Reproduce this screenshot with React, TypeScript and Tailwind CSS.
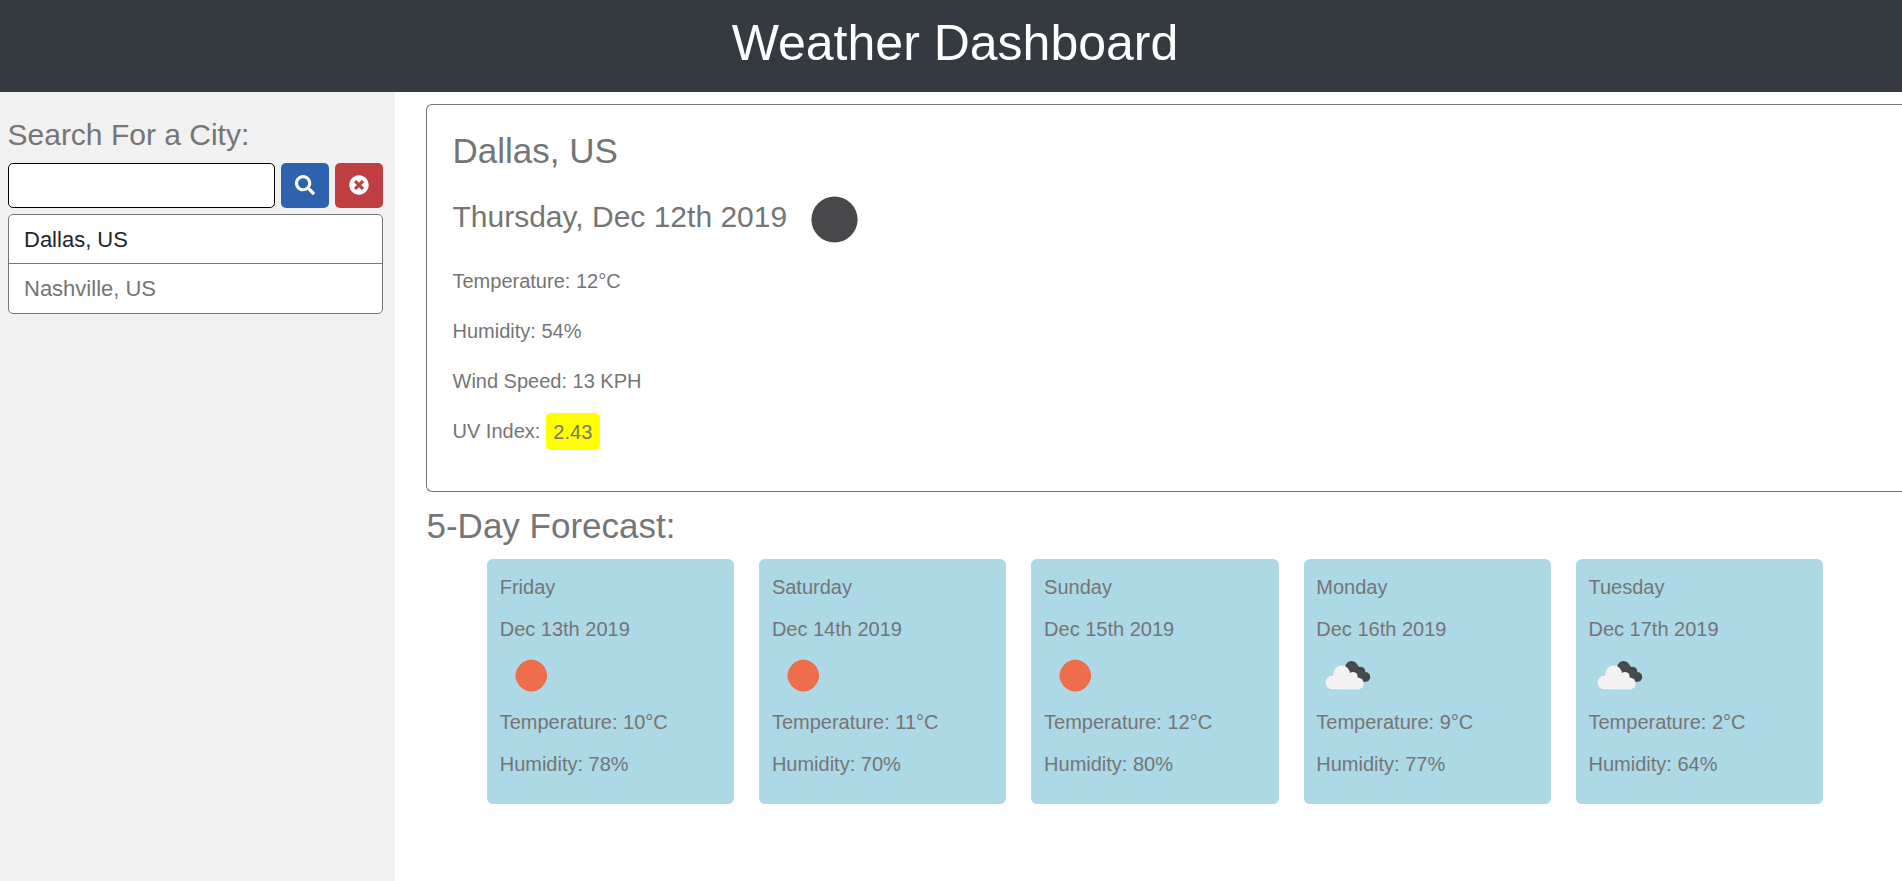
import { FaSearch, FaTimesCircle } from "react-icons/fa";

type Sky = "clear" | "clouds";

interface Day {
  name: string;
  date: string;
  sky: Sky;
  temperature: string;
  humidity: string;
}

const days: Day[] = [
  { name: "Friday", date: "Dec 13th 2019", sky: "clear", temperature: "10°C", humidity: "78%" },
  { name: "Saturday", date: "Dec 14th 2019", sky: "clear", temperature: "11°C", humidity: "70%" },
  { name: "Sunday", date: "Dec 15th 2019", sky: "clear", temperature: "12°C", humidity: "80%" },
  { name: "Monday", date: "Dec 16th 2019", sky: "clouds", temperature: "9°C", humidity: "77%" },
  { name: "Tuesday", date: "Dec 17th 2019", sky: "clouds", temperature: "2°C", humidity: "64%" },
];

function SkyIcon({ sky }: { sky: Sky }) {
  if (sky === "clear") {
    return (
      <svg className="block h-[39px] w-[62px]" viewBox="0 0 62 39">
        <path
          d="M31.3 3.5 C39 3.5 47.1 12 47.1 19.5 C47.1 27.3 39 35.6 31.3 35.6 C23.5 35.6 15.4 27.3 15.4 19.5 C15.4 12 23.5 3.5 31.3 3.5 Z"
          fill="#ed6e4c"
        />
        <circle cx="31.3" cy="19.5" r="15.4" fill="#ed6e4c" />
      </svg>
    );
  }
  return (
    <svg className="block h-[39px] w-[62px]" viewBox="0 0 62 39">
      <g fill="#474a4c">
        <circle cx="35.5" cy="11.2" r="6.2" />
        <circle cx="44.5" cy="15.5" r="4.8" />
        <circle cx="49.2" cy="21" r="5" />
        <path d="M31 10 L41 8.5 L48 17 L48 26 L40 25 Z" />
      </g>
      <g fill="#f2f2f2">
        <circle cx="16.3" cy="26.5" r="6.8" />
        <circle cx="25.7" cy="17.8" r="8.3" />
        <circle cx="37" cy="20.5" r="4.6" />
        <circle cx="41.7" cy="27.4" r="6" />
        <path d="M16.3 20 L22 17 L36 17 L42 24 L41.7 33.4 L16.3 33.3 Z" />
      </g>
    </svg>
  );
}

function DayCard({ day }: { day: Day }) {
  return (
    <article className="flex h-[245px] flex-col gap-3 rounded-[6px] bg-[#add8e6] px-[12.7px] pt-[13px] leading-[30px]">
      <p>{day.name}</p>
      <p>{day.date}</p>
      <SkyIcon sky={day.sky} />
      <p>Temperature: {day.temperature}</p>
      <p>Humidity: {day.humidity}</p>
    </article>
  );
}

export default function App() {
  return (
    <div className="flex h-[881px] flex-col overflow-hidden bg-white font-['Liberation_Sans',Arial,sans-serif] text-[20px] text-[#757575]">
      <header className="h-[92px] shrink-0 bg-[#343a40] pt-[13px] pl-2 text-center">
        <h1 className="text-[50px] leading-[60px] text-white">Weather Dashboard</h1>
      </header>
      <div className="flex min-h-0 flex-1">
        <aside className="w-[395px] shrink-0 bg-[#f1f1f1] pt-[25px] pr-3 pl-2">
          <h2 className="-ml-[0.5px] text-[30px] leading-[36px]">Search For a City:</h2>
          <form className="mt-[10px] flex gap-[6px]" onSubmit={(e) => e.preventDefault()}>
            <input
              aria-label="City"
              className="h-[45px] w-[267px] rounded-[5px] border border-black bg-white px-3 outline-none"
            />
            <button aria-label="Search" className="flex h-[45px] w-12 items-center justify-center rounded-[5px] bg-[#2f62ae] pb-[2px] text-white">
              <FaSearch size={20} />
            </button>
            <button aria-label="Clear" className="flex h-[45px] w-12 items-center justify-center rounded-[5px] bg-[#bf3e41] pb-[2px] text-white">
              <FaTimesCircle size={20} />
            </button>
          </form>
          <ul className="mt-[6px] rounded-[5px] border border-[#757575] bg-white text-[22px]">
            <li className="h-[49px] border-b border-[#757575] pl-[15px] leading-[49px] text-[#212529]">Dallas, US</li>
            <li className="h-[49px] pl-[15px] leading-[49px]">Nashville, US</li>
          </ul>
        </aside>
        <main className="min-w-0 flex-1 pt-3 pl-[31px]">
          <section className="h-[388px] rounded-l-[6px] border border-r-0 border-[#757575] pt-[25px] pl-[25.5px]">
            <h2 className="text-[35px] leading-[42px]">Dallas, US</h2>
            <div className="mt-[23px] flex h-[48px] items-center">
              <h3 className="pb-[4px] text-[30px] leading-[36px]">Thursday, Dec 12th 2019</h3>
              <svg className="ml-[23.5px] size-[47px]" viewBox="0 0 47 47">
                <circle cx="23.5" cy="23.5" r="23.1" fill="#48484a" />
              </svg>
            </div>
            <div className="mt-[23px] flex flex-col gap-5 leading-[30px]">
              <p>Temperature: 12°C</p>
              <p>Humidity: 54%</p>
              <p>Wind Speed: 13 KPH</p>
              <div className="flex h-[30px] items-center">
                <p>UV Index:</p>
                <span className="ml-[5.5px] h-[37px] w-[54px] shrink-0 rounded-[5px] bg-[#ffff00] text-center leading-[38px]">
                  2.43
                </span>
              </div>
            </div>
          </section>
          <h2 className="mt-[13px] ml-[0.5px] text-[35px] leading-[42px]">5-Day Forecast:</h2>
          <div className="mt-3 ml-[61px] grid w-[1336px] grid-cols-5 gap-[25px]">
            {days.map((day) => (
              <DayCard key={day.name} day={day} />
            ))}
          </div>
        </main>
      </div>
    </div>
  );
}
